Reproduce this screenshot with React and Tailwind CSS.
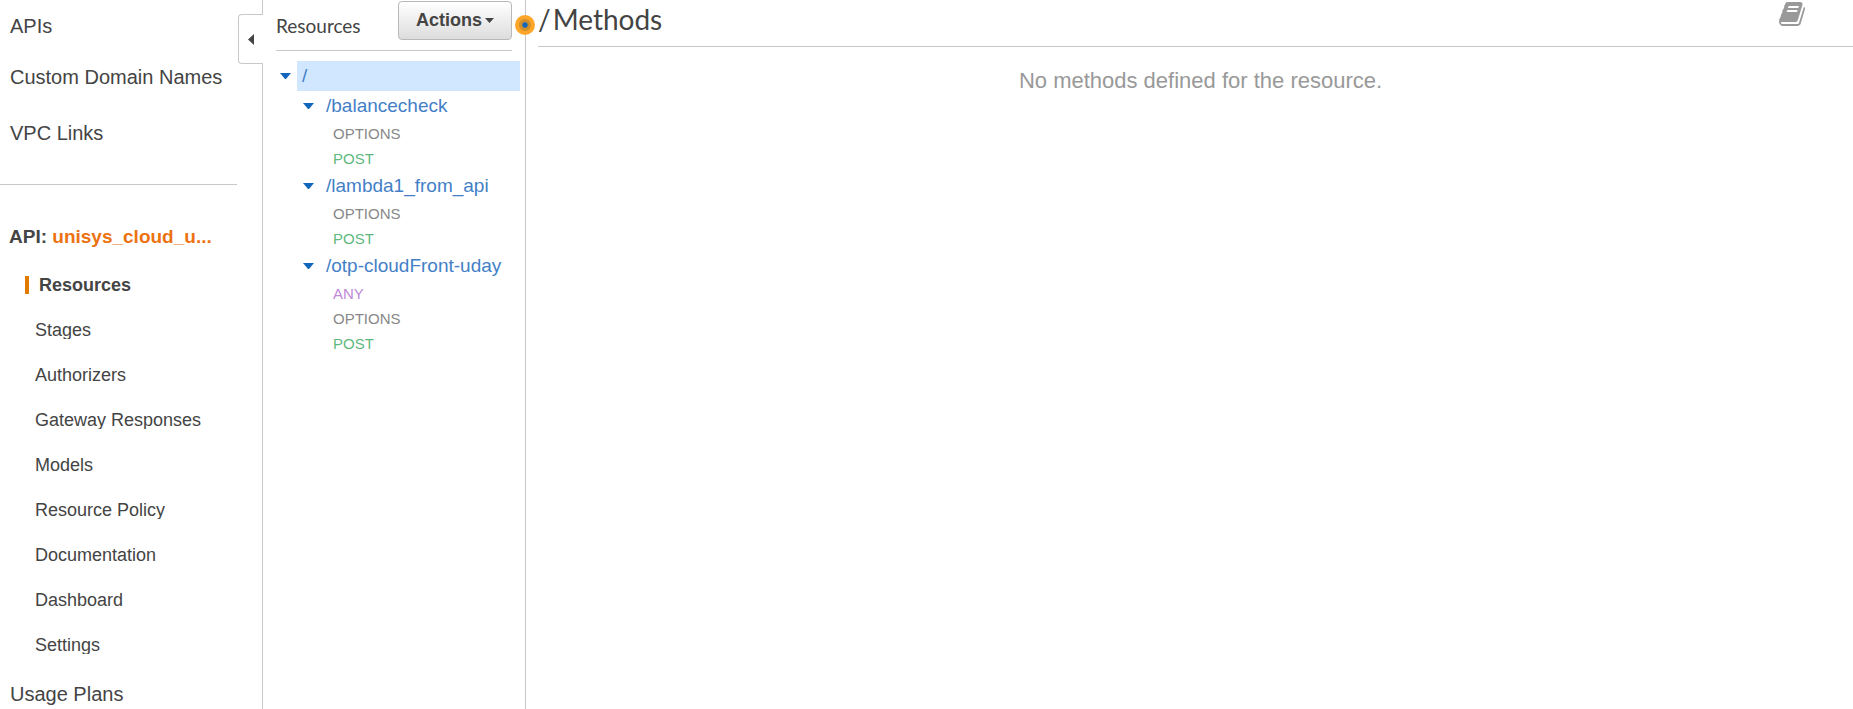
import React from "react";

const LINE = "border-[#c8c8c8]";

const topLinks = ["APIs", "Custom Domain Names", "VPC Links"];

const apiLinks = [
  "Resources",
  "Stages",
  "Authorizers",
  "Gateway Responses",
  "Models",
  "Resource Policy",
  "Documentation",
  "Dashboard",
  "Settings",
];

const resources = [
  { path: "/balancecheck", methods: ["OPTIONS", "POST"] },
  { path: "/lambda1_from_api", methods: ["OPTIONS", "POST"] },
  { path: "/otp-cloudFront-uday", methods: ["ANY", "OPTIONS", "POST"] },
];

const methodColors = {
  OPTIONS: "text-[#888888]",
  POST: "text-[#5fb97f]",
  ANY: "text-[#c08ad8]",
};

function Caret() {
  return (
    <svg className="h-[6px] w-[11px]" viewBox="0 0 11 6" fill="#1166bb" aria-hidden="true">
      <path d="M0 0H11L6 6H5Z" />
    </svg>
  );
}

function BookIcon() {
  return (
    <svg className="h-6 w-[26px]" viewBox="0 128 1664 1536" fill="#999999" aria-hidden="true">
      <path d="M1639 478q40 57 18 129l-275 906q-19 64-76.500 107.500t-122.500 43.500h-923q-77 0-148.500-53.500t-99.500-131.500q-24-67-2-127 0-4 3-27t4-37q1-8-3-21.500t-3-19.500q2-11 8-21t16.500-23.500 16.500-23.500q23-38 45-91.500t30-91.500q3-10 .5-30t-.5-28q3-11 17-28t17-23q21-36 42-92t25-90q1-9-2.500-32t.5-28q4-13 22-30.500t22-22.500q19-26 42.500-84.500t27.500-96.500q1-8-3-25.500t-2-26.500q2-8 9-18t18-23 17-21q8-12 16.500-30.500t15-35 16-36 19.500-32 26.500-23.500 36-11.500 47.500 5.500l-1 3q38-9 51-9h761q74 0 114 56t18 130l-274 906q-36 119-71.500 153.500t-128.500 34.500h-869q-27 0-38 15-11 16-1 43 24 70 144 70h923q29 0 56-15.500t35-41.500l300-987q7-22 5-57 38 15 59 43zm-1064 2q-4 13 2 22.500t20 9.500h608q13 0 25.500-9.500t16.500-22.500l21-64q4-13-2-22.500t-20-9.500h-608q-13 0-25.500 9.500t-16.500 22.500zm-83 256q-4 13 2 22.500t20 9.500h608q13 0 25.500-9.500t16.500-22.500l21-64q4-13-2-22.500t-20-9.500h-608q-13 0-25.500 9.500t-16.500 22.500z" />
    </svg>
  );
}

function Sidebar() {
  return (
    <aside className={`relative w-[263px] shrink-0 border-r ${LINE}`}>
      <nav aria-label="API Gateway">
        <ul className={`mr-[25px] flex flex-col gap-[27px] border-b pt-[14px] pb-[39px] ${LINE}`}>
          {topLinks.map((label) => (
            <li key={label} className="pl-[10px] text-[20px] leading-6 last:mt-[5px]">
              <a href="#">{label}</a>
            </li>
          ))}
        </ul>
        <p className="mt-10 pl-[9px] text-[19px] leading-6 font-bold">
          API: <a href="#" className="text-[#ec7211]">unisys_cloud_u...</a>
        </p>
        <ul className="mt-[27px] flex flex-col gap-[27px]">
          {apiLinks.map((label, i) => (
            <li key={label} className="flex text-[18px] leading-[18px]">
              <a
                href="#"
                className={
                  i === 0
                    ? "ml-[25px] h-[18px] overflow-hidden border-l-4 border-[#e07b00] pl-[10px] font-bold"
                    : "ml-[35px] h-[18px] overflow-hidden"
                }
              >
                {label}
              </a>
            </li>
          ))}
        </ul>
        <p className="mt-7 pl-[10px] text-[20px] leading-6">
          <a href="#">Usage Plans</a>
        </p>
      </nav>
      <button
        type="button"
        aria-label="Collapse navigation"
        className={`absolute top-[14px] -right-px flex h-[50px] w-[25px] items-center justify-center rounded-l-[4px] border border-r-0 bg-white ${LINE}`}
      >
        <svg className="h-[11px] w-[6px]" viewBox="0 0 6 11" fill="#444444" aria-hidden="true">
          <path d="M6 0V11L0 5.500Z" />
        </svg>
      </button>
    </aside>
  );
}

function ResourceTree() {
  return (
    <section className={`relative w-[263px] shrink-0 border-r ${LINE}`}>
      <header className={`mx-[13px] flex items-start justify-between border-b pt-px pb-[10px] ${LINE}`}>
        <h2 className="pt-[13px] font-[Lato,sans-serif] text-[19px] leading-6">Resources</h2>
        <button
          type="button"
          className="flex h-[39px] w-[114px] items-center justify-center gap-[3px] rounded-[4px] border border-[#b8b8b8] bg-linear-to-b from-white to-[#dddddd] text-[18px] font-bold"
        >
          Actions
          <svg className="h-[5px] w-[9px]" viewBox="0 0 9 5" fill="#444444" aria-hidden="true">
            <path d="M0 0H9L4.500 5Z" />
          </svg>
        </button>
      </header>
      <ul className="mt-[10px] mr-[5px] text-[19px] leading-[30px] text-[#437fc7]">
        <li>
          <div className="flex items-center">
            <button type="button" aria-label="Toggle /" className="flex h-[30px] w-[34px] items-center pl-[17px]">
              <Caret />
            </button>
            <a href="#" className="flex-1 bg-[#d1e7ff] pl-[5px]">/</a>
          </div>
          <ul>
            {resources.map((r) => (
              <li key={r.path}>
                <div className="flex items-center">
                  <button
                    type="button"
                    aria-label={`Toggle ${r.path}`}
                    className="flex h-[30px] w-[63px] items-center pl-10"
                  >
                    <Caret />
                  </button>
                  <a href="#">{r.path}</a>
                </div>
                <ul className="pl-[70px] text-[15px] leading-[25px]">
                  {r.methods.map((m) => (
                    <li key={m}>
                      <a href="#" className={methodColors[m]}>{m}</a>
                    </li>
                  ))}
                </ul>
              </li>
            ))}
          </ul>
        </li>
      </ul>
      <svg className="absolute top-[15px] -right-[10px] h-5 w-5" viewBox="0 0 20 20" aria-hidden="true">
        <circle cx="10" cy="10" r="10" fill="#ffa629" />
        <circle cx="10" cy="10" r="6" fill="#cf8f2b" />
        <circle cx="10" cy="10" r="2.700" fill="#1166bb" />
      </svg>
    </section>
  );
}

export default function App() {
  return (
    <div className="flex min-h-screen bg-white font-['Liberation_Sans',Arial,sans-serif] text-[#444444]">
      <Sidebar />
      <ResourceTree />
      <main className="min-w-0 flex-1 pl-3">
        <header className={`flex items-start justify-between border-b pt-[2px] pr-12 pb-[10px] ${LINE}`}>
          <h1 className="flex gap-[2px] font-[Lato,sans-serif] text-[28px] leading-[34px]">
            <span>/ </span>
            <span>Methods</span>
          </h1>
          <button type="button" aria-label="Documentation">
            <BookIcon />
          </button>
        </header>
        <p className="mt-5 pl-[10px] text-center text-[22px] leading-7 text-[#999999]">
          No methods defined for the resource.
        </p>
      </main>
    </div>
  );
}
